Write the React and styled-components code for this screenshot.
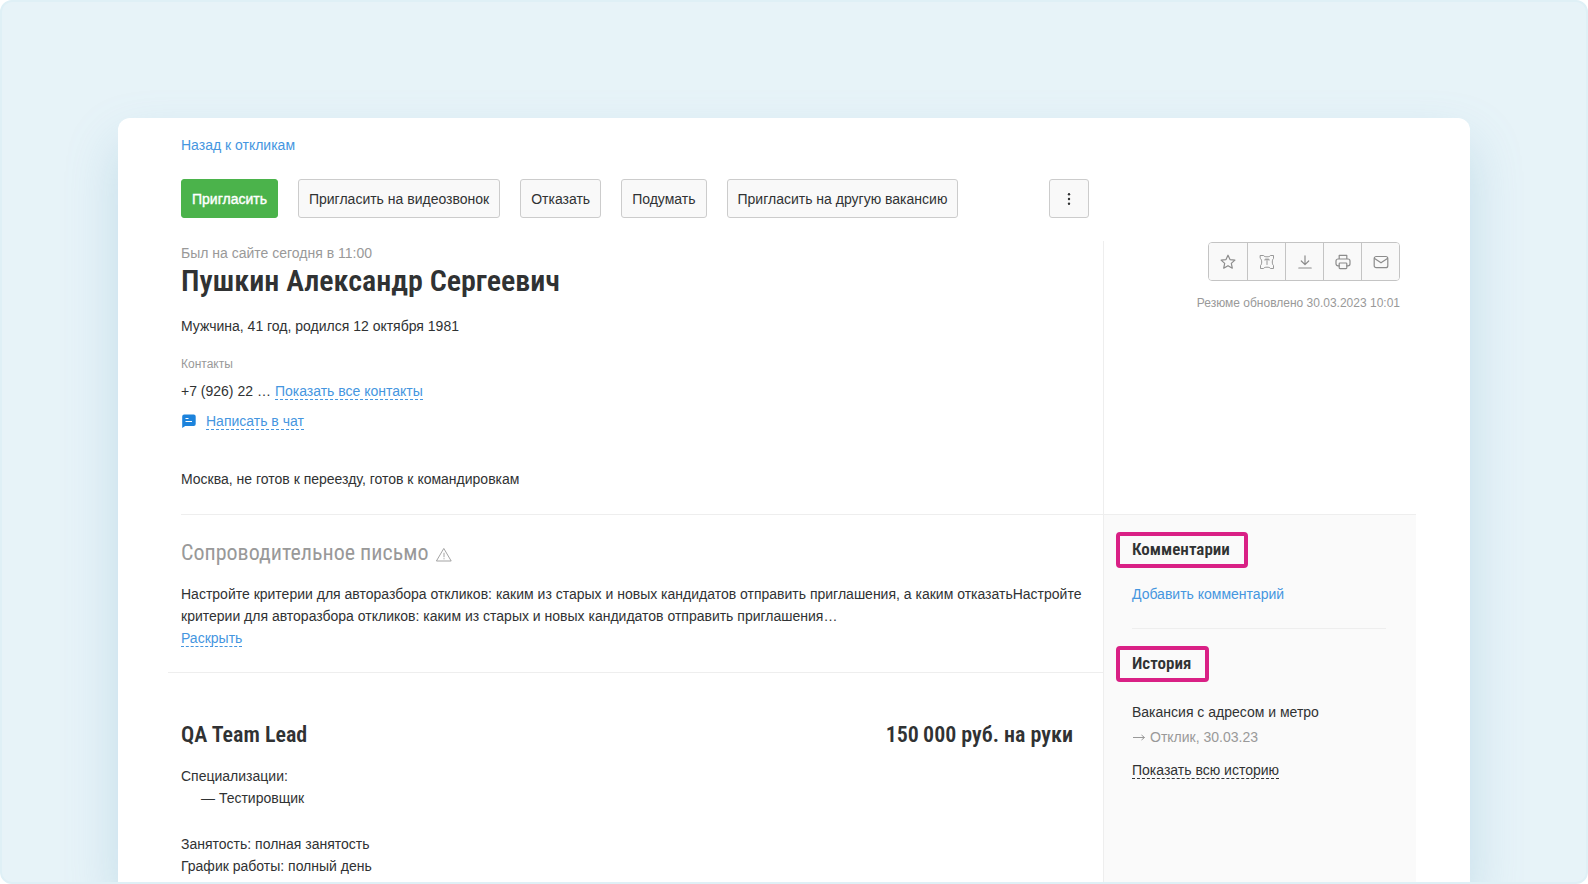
import styled, { createGlobalStyle, css } from 'styled-components';

const GlobalStyle = createGlobalStyle`
    :root {
        --color-text: #303233;
        --color-muted: #999999;
        --color-link: #4596df;
        --color-line: #eeeeee;
        --color-control: #f9f9f9;
        --color-accent: #d92085;
        --font-heading: 'Roboto Condensed', Roboto, 'Liberation Sans', sans-serif;
        --sidebar-width: 312px;
    }

    * {
        box-sizing: border-box;
    }

    body {
        margin: 0;
        color: var(--color-text);
        font: 14px/22px 'Liberation Sans', Arial, sans-serif;
        background: #ffffff;
    }

    h1, h2, h3, p, ul {
        margin: 0;
        padding: 0;
        font-weight: 400;
    }

    button {
        font: inherit;
        color: inherit;
        cursor: pointer;
    }
`;

const Stage = styled.div`
    min-height: 100vh;
    padding: 116px 116px 0;
    display: flex;
    background: #e7f3f8;
    border: 2px solid #dff0f6;
    border-radius: 12px;
    overflow: hidden;
`;
const Card = styled.main`
    padding: 16px 54px 0 63px;
    flex: 1;
    display: flex;
    flex-direction: column;
    background: #ffffff;
    border-radius: 12px 12px 0 0;
    box-shadow: 0 26px 52px rgba(100, 165, 198, .28);
`;
const TextLink = styled.a`
    align-self: flex-start;
    color: var(--color-link);
    text-decoration: none;
`;
const Actions = styled.div`
    margin: 23px calc(var(--sidebar-width) + 15px) 23px 0;
    display: flex;
    gap: 20px;
`;
const Button = styled.button`
    height: 39px;
    padding: 0 10px;
    background: var(--color-control);
    border: 1px solid #cccccc;
    border-radius: 3px;
    white-space: nowrap;

    ${({$primary}) => $primary && css`
        color: #ffffff;
        background: #4bb34b;
        border-color: #4bb34b;
        -webkit-text-stroke: .4px #ffffff;
    `}
`;
const MenuButton = styled(Button)`
    width: 40px;
    margin-left: auto;
    padding: 0;
    display: flex;
    align-items: center;
    justify-content: center;
`;
const Columns = styled.div`
    flex: 1;
    display: grid;
    grid-template-columns: minmax(0, 1fr) var(--sidebar-width);
    grid-template-rows: auto 1fr;
`;
const Person = styled.section`
    padding-bottom: 24px;
    border-right: 1px solid var(--color-line);
    border-bottom: 1px solid var(--color-line);
`;
const LastSeen = styled.p`
    line-height: 24px;
    color: var(--color-muted);
`;
const Name = styled.h1`
    font: 600 30px/32px var(--font-heading);
`;
const Facts = styled.p`
    margin-top: 18px;
`;
const Caption = styled.p`
    margin-top: 19px;
    font-size: 12px;
    line-height: 16px;
    color: var(--color-muted);
`;
const Contact = styled.div`
    min-height: 22px;
    margin-top: 8px;
    display: flex;
    align-items: center;
    gap: ${({$gap}) => $gap || 4}px;
`;
const Reveal = styled.button`
    padding: 0;
    background: none;
    border: 0;
    border-bottom: 1px dashed currentColor;
    line-height: 16px;
    color: ${({$dark}) => $dark ? 'inherit' : 'var(--color-link)'};
`;
const Place = styled.p`
    margin-top: 36px;
`;
const Tools = styled.div`
    padding: 1px 16px 0 0;
    display: flex;
    flex-direction: column;
    align-items: flex-end;
    border-bottom: 1px solid var(--color-line);
`;
const ToolGroup = styled.div`
    display: flex;
    border: 1px solid #c4c4c4;
    border-radius: 4px;
    overflow: hidden;
`;
const ToolButton = styled.button`
    width: 38px;
    height: 37px;
    padding: 0;
    display: flex;
    align-items: center;
    justify-content: center;
    background: var(--color-control);
    border: 0;
    color: #8c8c8c;

    & + & {
        border-left: 1px solid #c4c4c4;
    }
`;
const Updated = styled.p`
    margin-top: 14px;
    font-size: 12px;
    line-height: 16px;
    color: var(--color-muted);
`;
const Resume = styled.div`
    border-right: 1px solid var(--color-line);
`;
const Letter = styled.section`
    margin-left: -13px;
    padding: 24px 0 23px 13px;
    border-bottom: 1px solid var(--color-line);
`;
const LetterTitle = styled.h2`
    margin-bottom: 16px;
    display: flex;
    align-items: center;
    gap: 8px;
    font: 400 22px/28px var(--font-heading);
    color: var(--color-muted);

    svg {
        margin-top: 4px;
    }
`;
const Position = styled.section`
    padding: 48px 30px 5px 0;
`;
const PositionTitle = styled.div`
    margin-bottom: 16px;
    display: flex;
    justify-content: space-between;

    h2, p {
        font: 600 22px/28px var(--font-heading);
    }
`;
const Specs = styled.ul`
    margin-bottom: 24px;
    padding-left: 20px;
    list-style: none;
`;
const Sidebar = styled.aside`
    padding: 17px 30px 0 12px;
    background: #fafafa;
`;
const Marked = styled.h3`
    width: fit-content;
    padding: 0 14px 2px 12px;
    border: 4px solid var(--color-accent);
    border-radius: 4px;
    font: 600 17px/26px var(--font-heading);
`;
const SidebarBody = styled.div`
    margin-left: 16px;
`;
const Comments = styled(SidebarBody)`
    margin-bottom: 17px;
    padding: 15px 0 23px;
    border-bottom: 1px solid var(--color-line);
`;
const History = styled(SidebarBody)`
    padding-top: 19px;
`;
const HistoryEvent = styled.p`
    margin: 3px 0 11px;
    display: flex;
    align-items: center;
    gap: 4px;
    color: var(--color-muted);
`;

const Icon = ({width = 1.2, children}) => (
    <svg
        width="16"
        height="16"
        viewBox="0 0 16 16"
        fill="none"
        stroke="currentColor"
        strokeWidth={width}
        strokeLinecap="round"
        strokeLinejoin="round"
        aria-hidden="true"
    >
        {children}
    </svg>
);
const DotsIcon = () => (
    <svg width="16" height="16" viewBox="0 0 16 16" fill="currentColor" aria-hidden="true">
        <circle cx="8" cy="3.2" r="1.2" />
        <circle cx="8" cy="8" r="1.2" />
        <circle cx="8" cy="12.8" r="1.2" />
    </svg>
);
const ChatIcon = () => (
    <svg width="16" height="16" viewBox="0 0 16 16" aria-hidden="true">
        <path d="M3.2 1.5h9.5a2 2 0 0 1 2 2v7.4a2 2 0 0 1-2 2H4.2L1.2 15V3.5a2 2 0 0 1 2-2z" fill="#1c83dc" />
        <path d="M4.5 5.5h3M4.5 8.5h6.5" stroke="#ffffff" />
    </svg>
);
const StarIcon = () => (
    <Icon>
        <path d="M8 1.2l2 4.4 4.9.5-3.6 3.3 1 4.8L8 11.7l-4.3 2.5 1-4.8L1.1 6.1 6 5.6z" />
    </Icon>
);
const FrameIcon = () => (
    <Icon width={0.9}>
        <path d="M1.5 1.5h3c.6 1 1.800 1.300 3.500 1.300s2.900-.3 3.500-1.300h3v3c-.8.6-1.200 1.800-1.200 3.500s.4 2.900 1.200 3.500v3h-3c-.6-1-1.800-1.300-3.500-1.300s-2.900.3-3.500 1.300h-3v-3c.8-.6 1.200-1.800 1.200-3.500S2.300 5.100 1.500 4.500z" />
        <path d="M6 6.200v-1h4v1M8 5.200v5.300" />
    </Icon>
);
const DownloadIcon = () => (
    <Icon>
        <path d="M8 1.8v8.600M4.300 7L8 10.600 11.700 7M1.800 14h12.400" />
    </Icon>
);
const PrintIcon = () => (
    <Icon>
        <path d="M4.200 5V1.300h7.600V5M4.200 11.800H3a2 2 0 0 1-2-2V7a2 2 0 0 1 2-2h10a2 2 0 0 1 2 2v2.800a2 2 0 0 1-2 2h-1.200" />
        <rect x="4.2" y="9" width="7.6" height="5.6" rx=".8" />
    </Icon>
);
const MailIcon = () => (
    <Icon>
        <rect x="1.2" y="2.5" width="13.6" height="11.2" rx="2" />
        <path d="M1.6 4.5L8 8.800l6.400-4.300" />
    </Icon>
);
const WarningIcon = () => (
    <Icon width={0.9}>
        <path d="M8 1.8L15.200 14H.8z" />
        <path d="M8 6.200v3.600M8 11.600v.3" />
    </Icon>
);
const ArrowIcon = () => (
    <svg width="14" height="8" viewBox="0 0 14 8" fill="none" stroke="currentColor" aria-hidden="true">
        <path d="M1 4.5h11.500M9.500 2l3 2.500-3 2.500" />
    </svg>
);

const tools = [
    {label: 'В избранное', icon: StarIcon},
    {label: 'Переслать', icon: FrameIcon},
    {label: 'Скачать', icon: DownloadIcon},
    {label: 'Распечатать', icon: PrintIcon},
    {label: 'Отправить по почте', icon: MailIcon},
];

const App = () => (
    <>
        <GlobalStyle />
        <Stage>
            <Card>
                <TextLink href="#responses">Назад к откликам</TextLink>
                <Actions>
                    <Button type="button" $primary>Пригласить</Button>
                    <Button type="button">Пригласить на видеозвонок</Button>
                    <Button type="button">Отказать</Button>
                    <Button type="button">Подумать</Button>
                    <Button type="button">Пригласить на другую вакансию</Button>
                    <MenuButton type="button" aria-label="Ещё"><DotsIcon /></MenuButton>
                </Actions>
                <Columns>
                    <Person>
                        <LastSeen>Был на сайте сегодня в 11:00</LastSeen>
                        <Name>Пушкин Александр Сергеевич</Name>
                        <Facts>Мужчина, 41 год, родился 12 октября 1981</Facts>
                        <Caption>Контакты</Caption>
                        <Contact>
                            <span>+7 (926) 22 …</span>
                            <Reveal type="button">Показать все контакты</Reveal>
                        </Contact>
                        <Contact $gap={9}>
                            <ChatIcon />
                            <Reveal type="button">Написать в чат</Reveal>
                        </Contact>
                        <Place>Москва, не готов к переезду, готов к командировкам</Place>
                    </Person>
                    <Tools>
                        <ToolGroup>
                            {tools.map(({label, icon: ToolIcon}) => (
                                <ToolButton key={label} type="button" aria-label={label}>
                                    <ToolIcon />
                                </ToolButton>
                            ))}
                        </ToolGroup>
                        <Updated>Резюме обновлено 30.03.2023 10:01</Updated>
                    </Tools>
                    <Resume>
                        <Letter>
                            <LetterTitle>
                                Сопроводительное письмо
                                <WarningIcon />
                            </LetterTitle>
                            <p>
                                Настройте критерии для авторазбора откликов: каким из старых и новых кандидатов
                                отправить приглашения, а каким отказатьНастройте критерии для авторазбора откликов:
                                каким из старых и новых кандидатов отправить приглашения…
                            </p>
                            <Reveal type="button">Раскрыть</Reveal>
                        </Letter>
                        <Position>
                            <PositionTitle>
                                <h2>QA Team Lead</h2>
                                <p>150&#8201;000 руб. на руки</p>
                            </PositionTitle>
                            <p>Специализации:</p>
                            <Specs>
                                <li>— Тестировщик</li>
                            </Specs>
                            <p>Занятость: полная занятость</p>
                            <p>График работы: полный день</p>
                        </Position>
                    </Resume>
                    <Sidebar>
                        <Marked>Комментарии</Marked>
                        <Comments>
                            <TextLink href="#comment">Добавить комментарий</TextLink>
                        </Comments>
                        <Marked>История</Marked>
                        <History>
                            <p>Вакансия с адресом и метро</p>
                            <HistoryEvent>
                                <ArrowIcon />
                                Отклик, 30.03.23
                            </HistoryEvent>
                            <Reveal type="button" $dark>Показать всю историю</Reveal>
                        </History>
                    </Sidebar>
                </Columns>
            </Card>
        </Stage>
    </>
);

export default App;
